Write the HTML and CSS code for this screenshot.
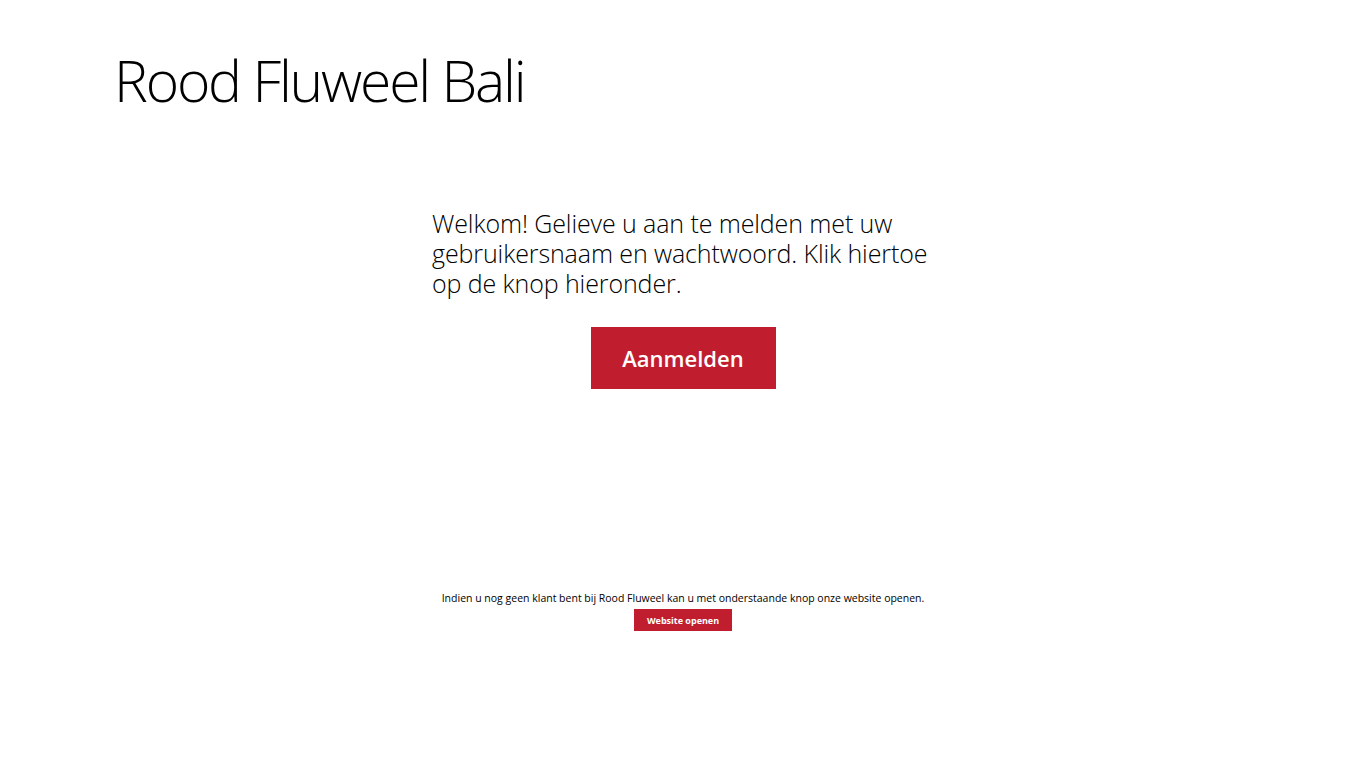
FILE: index.html
```html
<!DOCTYPE html>
<html lang="nl">
<head>
<meta charset="utf-8">
<title>Rood Fluweel Bali</title>
<link rel="stylesheet" href="styles.css">
</head>
<body>
<div class="page">
  <header class="header">
    <h1 class="title">Rood Fluweel Bali</h1>
  </header>
  <main class="main">
    <section class="login">
      <p class="intro">Welkom! Gelieve u aan te melden met uw gebruikersnaam en wachtwoord. Klik hiertoe op de knop hieronder.</p>
      <button class="btn btn-primary">Aanmelden</button>
    </section>
    <section class="signup">
      <p class="note">Indien u nog geen klant bent bij Rood Fluweel kan u met onderstaande knop onze website openen.</p>
      <button class="btn btn-small">Website openen</button>
    </section>
  </main>
</div>
</body>
</html>
```

FILE: styles.css
```css
html, body {
  margin: 0;
  padding: 0;
  background: #ffffff;
  color: #000000;
  font-family: "Open Sans", "Noto Sans", sans-serif;
}
.page {
  width: 1366px;
  height: 768px;
  display: flex;
  flex-direction: column;
}
.header {
  padding: 40px 0 0 114px;
  height: 110px;
  box-sizing: border-box;
}
.title {
  margin: 0;
  font-weight: 300;
  font-size: 57px;
  line-height: 80px;
  letter-spacing: -2.2px;
}
.main {
  display: flex;
  flex-direction: column;
  align-items: center;
}
.login {
  margin-top: 98px;
  width: 502px;
  display: flex;
  flex-direction: column;
  align-items: center;
}
.intro {
  margin: 0;
  font-weight: 300;
  font-size: 25px;
  line-height: 30px;
  letter-spacing: -0.1px;
  align-self: stretch;
}
.btn {
  border: none;
  background: #c01e2e;
  color: #ffffff;
  font-family: "Open Sans", "Noto Sans", sans-serif;
  font-weight: 700;
  padding: 0;
  cursor: pointer;
}
.btn-primary {
  margin-top: 29px;
  width: 185px;
  height: 62px;
  font-size: 22px;
  font-weight: 600;
}
.signup {
  margin-top: 202px;
  display: flex;
  flex-direction: column;
  align-items: center;
}
.note {
  margin: 0;
  font-size: 10.5px;
  line-height: 14px;
}
.btn-small {
  margin-top: 4px;
  width: 98px;
  height: 22px;
  font-size: 9px;
}
```
